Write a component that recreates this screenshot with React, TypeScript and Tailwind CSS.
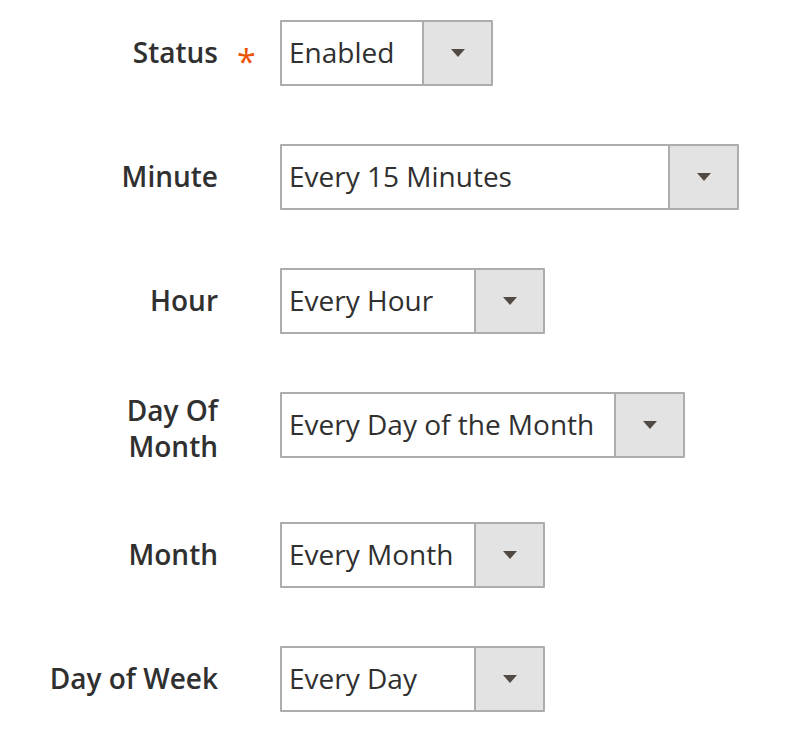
import React from "react";

type Row = {
  label: React.ReactNode;
  value: string;
  width: string;
  required?: boolean;
  twoLine?: boolean;
};

function Caret() {
  return (
    <svg width="14" height="8" viewBox="0 0 14 8" aria-hidden="true">
      <polygon points="0,0 14,0 7,8" fill="#514943" />
    </svg>
  );
}

function Select({ value, width }: { value: string; width: string }) {
  return (
    <div
      className={`ml-[62px] flex h-[66px] shrink-0 rounded-[1px] border-2 border-[#adadad] bg-white ${width}`}
    >
      <div className="flex-1 whitespace-nowrap pl-[7px] pt-[12px] text-[28px] leading-[36px] text-[#303030]">
        {value}
      </div>
      <div className="flex w-[69px] items-center justify-center border-l-2 border-[#adadad] bg-[#e3e3e3]">
        <Caret />
      </div>
    </div>
  );
}

export default function App() {
  const rows: Row[] = [
    { label: "Status", value: "Enabled", width: "w-[213px]", required: true },
    { label: "Minute", value: "Every 15 Minutes", width: "w-[459px]" },
    { label: "Hour", value: "Every Hour", width: "w-[265px]" },
    {
      label: (
        <>
          Day Of
          <br />
          Month
        </>
      ),
      value: "Every Day of the Month",
      width: "w-[405px]",
      twoLine: true,
    },
    { label: "Month", value: "Every Month", width: "w-[265px]" },
    { label: "Day of Week", value: "Every Day", width: "w-[265px]" },
  ];

  return (
    <div
      className="min-h-[732px] w-[794px] bg-white pt-[20px]"
      style={{ fontFamily: '"Open Sans", "Noto Sans", sans-serif' }}
    >
      <div className="flex flex-col gap-[58px]">
        {rows.map((r, i) => (
          <div key={i} className="flex items-start">
            <div
              className={`relative w-[218px] shrink-0 text-right text-[28px] font-semibold leading-[36px] text-[#303030] ${
                r.twoLine ? "pt-0" : "pt-[14px]"
              }`}
            >
              {r.label}
              {r.required && (
                <span className="absolute left-[237px] top-[24px] text-[34px] leading-[34px] font-normal text-[#eb5202]">
                  *
                </span>
              )}
            </div>
            <Select value={r.value} width={r.width} />
          </div>
        ))}
      </div>
    </div>
  );
}
